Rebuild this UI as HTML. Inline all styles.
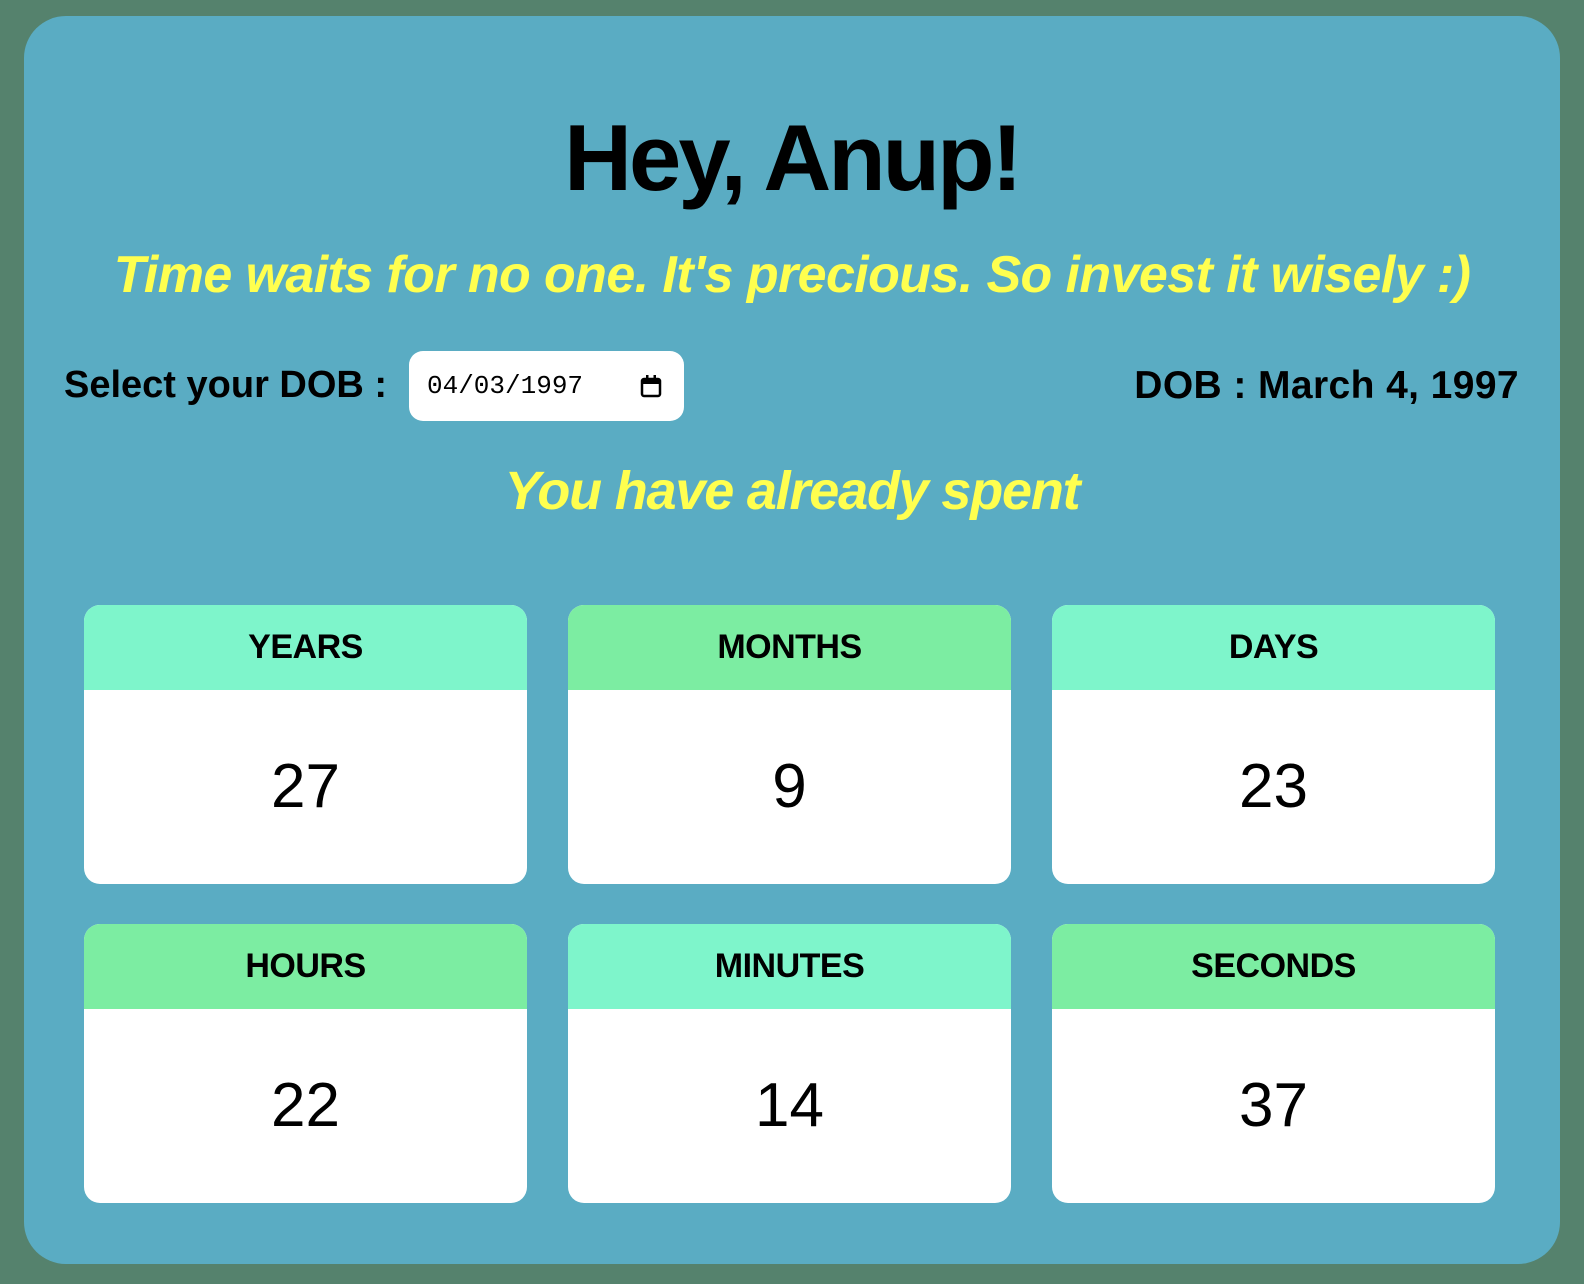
<!DOCTYPE html>
<html><head><style>
html,body{margin:0;padding:0}
body{width:1584px;height:1284px;background:#55826d;position:relative;overflow:hidden;font-family:"Liberation Sans",sans-serif}
.panel{position:absolute;left:24px;top:16px;width:1536px;height:1248px;background:#5aacc3;border-radius:42px}
.abs{position:absolute;white-space:nowrap}
h1{position:absolute;margin:0;left:0;width:1584px;text-align:center;top:104px;font-size:94px;font-weight:bold;letter-spacing:-3px;color:#000}
.y{color:#ffff4f;font-style:italic;font-weight:bold;text-align:center;left:0;width:1584px}
.card{position:absolute;width:443px;height:279px;background:#fff;border-radius:16px;overflow:hidden}
.card .h{height:85px;line-height:85px;text-align:center;font-weight:bold;font-size:34px;letter-spacing:-0.5px}
.card .v{height:194px;line-height:194px;text-align:center;font-size:62px}
.m{background:#7ef5cb}.g{background:#7cEDA2}
</style></head><body>
<div class="panel"></div>
<h1>Hey, Anup!</h1>
<div class="abs y" style="top:245px;font-size:52px;letter-spacing:-0.6px">Time waits for no one. It's precious. So invest it wisely :)</div>
<div class="abs" style="left:64px;top:364px;font-size:38px;font-weight:bold;letter-spacing:0px">Select your DOB :</div>
<div class="abs" style="left:409px;top:351px;width:275px;height:70px;background:#fff;border-radius:14px">
<span class="abs" style="left:18px;top:20px;font-family:'Liberation Mono',monospace;font-size:26px">04/03/1997</span>
<svg class="abs" style="left:231px;top:23px" width="22" height="24" viewBox="0 0 22 24"><rect x="2" y="5" width="18" height="17" rx="2" fill="none" stroke="#000" stroke-width="2.5"/><rect x="2" y="5" width="18" height="5" fill="#000"/><rect x="6" y="1" width="2.5" height="5" fill="#000"/><rect x="13.5" y="1" width="2.5" height="5" fill="#000"/></svg>
</div>
<div class="abs" style="right:65px;top:364px;font-size:39px;font-weight:bold;letter-spacing:0.4px">DOB : March 4, 1997</div>
<div class="abs y" style="top:460px;font-size:54px;letter-spacing:-1.2px">You have already spent</div>

<div class="card" style="left:84px;top:605px"><div class="h m">YEARS</div><div class="v">27</div></div>
<div class="card" style="left:568px;top:605px"><div class="h g">MONTHS</div><div class="v">9</div></div>
<div class="card" style="left:1052px;top:605px"><div class="h m">DAYS</div><div class="v">23</div></div>
<div class="card" style="left:84px;top:924px"><div class="h g">HOURS</div><div class="v">22</div></div>
<div class="card" style="left:568px;top:924px"><div class="h m">MINUTES</div><div class="v">14</div></div>
<div class="card" style="left:1052px;top:924px"><div class="h g">SECONDS</div><div class="v">37</div></div>
</body></html>
